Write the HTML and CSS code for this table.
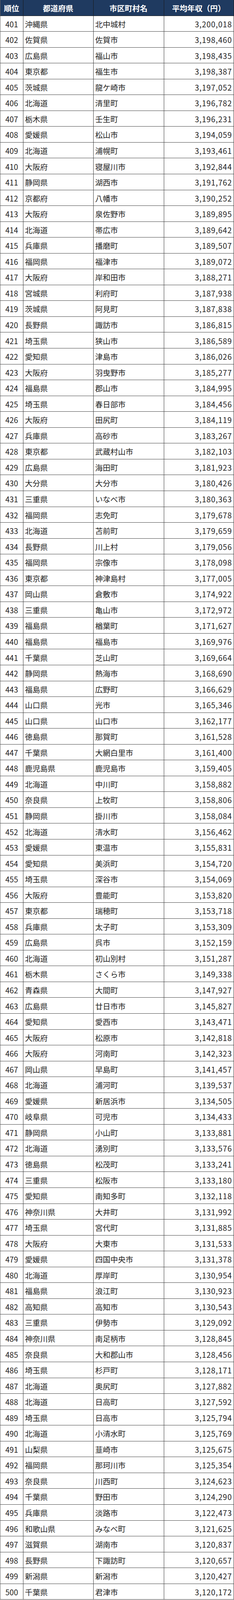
FILE: index.html
```html
<!DOCTYPE html>
<html lang="ja">
<head>
<meta charset="utf-8">
<title>平均年収ランキング 401〜500位</title>
<link rel="stylesheet" href="styles.css">
</head>
<body>
<table class="rank-table">
<thead>
<tr><th>順位</th><th>都道府県</th><th>市区町村名</th><th>平均年収（円）</th></tr>
</thead>
<tbody>
<tr><td class="rank">401</td><td>沖縄県</td><td>北中城村</td><td class="num">3,200,018</td></tr>
<tr><td class="rank">402</td><td>佐賀県</td><td>佐賀市</td><td class="num">3,198,460</td></tr>
<tr><td class="rank">403</td><td>広島県</td><td>福山市</td><td class="num">3,198,435</td></tr>
<tr><td class="rank">404</td><td>東京都</td><td>福生市</td><td class="num">3,198,387</td></tr>
<tr><td class="rank">405</td><td>茨城県</td><td>龍ケ崎市</td><td class="num">3,197,052</td></tr>
<tr><td class="rank">406</td><td>北海道</td><td>清里町</td><td class="num">3,196,782</td></tr>
<tr><td class="rank">407</td><td>栃木県</td><td>壬生町</td><td class="num">3,196,231</td></tr>
<tr><td class="rank">408</td><td>愛媛県</td><td>松山市</td><td class="num">3,194,059</td></tr>
<tr><td class="rank">409</td><td>北海道</td><td>浦幌町</td><td class="num">3,193,461</td></tr>
<tr><td class="rank">410</td><td>大阪府</td><td>寝屋川市</td><td class="num">3,192,844</td></tr>
<tr><td class="rank">411</td><td>静岡県</td><td>湖西市</td><td class="num">3,191,762</td></tr>
<tr><td class="rank">412</td><td>京都府</td><td>八幡市</td><td class="num">3,190,252</td></tr>
<tr><td class="rank">413</td><td>大阪府</td><td>泉佐野市</td><td class="num">3,189,895</td></tr>
<tr><td class="rank">414</td><td>北海道</td><td>帯広市</td><td class="num">3,189,642</td></tr>
<tr><td class="rank">415</td><td>兵庫県</td><td>播磨町</td><td class="num">3,189,507</td></tr>
<tr><td class="rank">416</td><td>福岡県</td><td>福津市</td><td class="num">3,189,072</td></tr>
<tr><td class="rank">417</td><td>大阪府</td><td>岸和田市</td><td class="num">3,188,271</td></tr>
<tr><td class="rank">418</td><td>宮城県</td><td>利府町</td><td class="num">3,187,938</td></tr>
<tr><td class="rank">419</td><td>茨城県</td><td>阿見町</td><td class="num">3,187,838</td></tr>
<tr><td class="rank">420</td><td>長野県</td><td>諏訪市</td><td class="num">3,186,815</td></tr>
<tr><td class="rank">421</td><td>埼玉県</td><td>狭山市</td><td class="num">3,186,589</td></tr>
<tr><td class="rank">422</td><td>愛知県</td><td>津島市</td><td class="num">3,186,026</td></tr>
<tr><td class="rank">423</td><td>大阪府</td><td>羽曳野市</td><td class="num">3,185,277</td></tr>
<tr><td class="rank">424</td><td>福島県</td><td>郡山市</td><td class="num">3,184,995</td></tr>
<tr><td class="rank">425</td><td>埼玉県</td><td>春日部市</td><td class="num">3,184,456</td></tr>
<tr><td class="rank">426</td><td>大阪府</td><td>田尻町</td><td class="num">3,184,119</td></tr>
<tr><td class="rank">427</td><td>兵庫県</td><td>高砂市</td><td class="num">3,183,267</td></tr>
<tr><td class="rank">428</td><td>東京都</td><td>武蔵村山市</td><td class="num">3,182,103</td></tr>
<tr><td class="rank">429</td><td>広島県</td><td>海田町</td><td class="num">3,181,923</td></tr>
<tr><td class="rank">430</td><td>大分県</td><td>大分市</td><td class="num">3,180,426</td></tr>
<tr><td class="rank">431</td><td>三重県</td><td>いなべ市</td><td class="num">3,180,363</td></tr>
<tr><td class="rank">432</td><td>福岡県</td><td>志免町</td><td class="num">3,179,678</td></tr>
<tr><td class="rank">433</td><td>北海道</td><td>苫前町</td><td class="num">3,179,659</td></tr>
<tr><td class="rank">434</td><td>長野県</td><td>川上村</td><td class="num">3,179,056</td></tr>
<tr><td class="rank">435</td><td>福岡県</td><td>宗像市</td><td class="num">3,178,098</td></tr>
<tr><td class="rank">436</td><td>東京都</td><td>神津島村</td><td class="num">3,177,005</td></tr>
<tr><td class="rank">437</td><td>岡山県</td><td>倉敷市</td><td class="num">3,174,922</td></tr>
<tr><td class="rank">438</td><td>三重県</td><td>亀山市</td><td class="num">3,172,972</td></tr>
<tr><td class="rank">439</td><td>福島県</td><td>楢葉町</td><td class="num">3,171,627</td></tr>
<tr><td class="rank">440</td><td>福島県</td><td>福島市</td><td class="num">3,169,976</td></tr>
<tr><td class="rank">441</td><td>千葉県</td><td>芝山町</td><td class="num">3,169,664</td></tr>
<tr><td class="rank">442</td><td>静岡県</td><td>熱海市</td><td class="num">3,168,690</td></tr>
<tr><td class="rank">443</td><td>福島県</td><td>広野町</td><td class="num">3,166,629</td></tr>
<tr><td class="rank">444</td><td>山口県</td><td>光市</td><td class="num">3,165,346</td></tr>
<tr><td class="rank">445</td><td>山口県</td><td>山口市</td><td class="num">3,162,177</td></tr>
<tr><td class="rank">446</td><td>徳島県</td><td>那賀町</td><td class="num">3,161,528</td></tr>
<tr><td class="rank">447</td><td>千葉県</td><td>大網白里市</td><td class="num">3,161,400</td></tr>
<tr><td class="rank">448</td><td>鹿児島県</td><td>鹿児島市</td><td class="num">3,159,405</td></tr>
<tr><td class="rank">449</td><td>北海道</td><td>中川町</td><td class="num">3,158,882</td></tr>
<tr><td class="rank">450</td><td>奈良県</td><td>上牧町</td><td class="num">3,158,806</td></tr>
<tr><td class="rank">451</td><td>静岡県</td><td>掛川市</td><td class="num">3,158,084</td></tr>
<tr><td class="rank">452</td><td>北海道</td><td>清水町</td><td class="num">3,156,462</td></tr>
<tr><td class="rank">453</td><td>愛媛県</td><td>東温市</td><td class="num">3,155,831</td></tr>
<tr><td class="rank">454</td><td>愛知県</td><td>美浜町</td><td class="num">3,154,720</td></tr>
<tr><td class="rank">455</td><td>埼玉県</td><td>深谷市</td><td class="num">3,154,069</td></tr>
<tr><td class="rank">456</td><td>大阪府</td><td>豊能町</td><td class="num">3,153,820</td></tr>
<tr><td class="rank">457</td><td>東京都</td><td>瑞穂町</td><td class="num">3,153,718</td></tr>
<tr><td class="rank">458</td><td>兵庫県</td><td>太子町</td><td class="num">3,153,309</td></tr>
<tr><td class="rank">459</td><td>広島県</td><td>呉市</td><td class="num">3,152,159</td></tr>
<tr><td class="rank">460</td><td>北海道</td><td>初山別村</td><td class="num">3,151,287</td></tr>
<tr><td class="rank">461</td><td>栃木県</td><td>さくら市</td><td class="num">3,149,338</td></tr>
<tr><td class="rank">462</td><td>青森県</td><td>大間町</td><td class="num">3,147,927</td></tr>
<tr><td class="rank">463</td><td>広島県</td><td>廿日市市</td><td class="num">3,145,827</td></tr>
<tr><td class="rank">464</td><td>愛知県</td><td>愛西市</td><td class="num">3,143,471</td></tr>
<tr><td class="rank">465</td><td>大阪府</td><td>松原市</td><td class="num">3,142,818</td></tr>
<tr><td class="rank">466</td><td>大阪府</td><td>河南町</td><td class="num">3,142,323</td></tr>
<tr><td class="rank">467</td><td>岡山県</td><td>早島町</td><td class="num">3,141,457</td></tr>
<tr><td class="rank">468</td><td>北海道</td><td>浦河町</td><td class="num">3,139,537</td></tr>
<tr><td class="rank">469</td><td>愛媛県</td><td>新居浜市</td><td class="num">3,134,505</td></tr>
<tr><td class="rank">470</td><td>岐阜県</td><td>可児市</td><td class="num">3,134,433</td></tr>
<tr><td class="rank">471</td><td>静岡県</td><td>小山町</td><td class="num">3,133,881</td></tr>
<tr><td class="rank">472</td><td>北海道</td><td>湧別町</td><td class="num">3,133,576</td></tr>
<tr><td class="rank">473</td><td>徳島県</td><td>松茂町</td><td class="num">3,133,241</td></tr>
<tr><td class="rank">474</td><td>三重県</td><td>松阪市</td><td class="num">3,133,180</td></tr>
<tr><td class="rank">475</td><td>愛知県</td><td>南知多町</td><td class="num">3,132,118</td></tr>
<tr><td class="rank">476</td><td>神奈川県</td><td>大井町</td><td class="num">3,131,992</td></tr>
<tr><td class="rank">477</td><td>埼玉県</td><td>宮代町</td><td class="num">3,131,885</td></tr>
<tr><td class="rank">478</td><td>大阪府</td><td>大東市</td><td class="num">3,131,533</td></tr>
<tr><td class="rank">479</td><td>愛媛県</td><td>四国中央市</td><td class="num">3,131,378</td></tr>
<tr><td class="rank">480</td><td>北海道</td><td>厚岸町</td><td class="num">3,130,954</td></tr>
<tr><td class="rank">481</td><td>福島県</td><td>浪江町</td><td class="num">3,130,923</td></tr>
<tr><td class="rank">482</td><td>高知県</td><td>高知市</td><td class="num">3,130,543</td></tr>
<tr><td class="rank">483</td><td>三重県</td><td>伊勢市</td><td class="num">3,129,092</td></tr>
<tr><td class="rank">484</td><td>神奈川県</td><td>南足柄市</td><td class="num">3,128,845</td></tr>
<tr><td class="rank">485</td><td>奈良県</td><td>大和郡山市</td><td class="num">3,128,456</td></tr>
<tr><td class="rank">486</td><td>埼玉県</td><td>杉戸町</td><td class="num">3,128,171</td></tr>
<tr><td class="rank">487</td><td>北海道</td><td>奥尻町</td><td class="num">3,127,882</td></tr>
<tr><td class="rank">488</td><td>北海道</td><td>日高町</td><td class="num">3,127,592</td></tr>
<tr><td class="rank">489</td><td>埼玉県</td><td>日高市</td><td class="num">3,125,794</td></tr>
<tr><td class="rank">490</td><td>北海道</td><td>小清水町</td><td class="num">3,125,769</td></tr>
<tr><td class="rank">491</td><td>山梨県</td><td>韮崎市</td><td class="num">3,125,675</td></tr>
<tr><td class="rank">492</td><td>福岡県</td><td>那珂川市</td><td class="num">3,125,354</td></tr>
<tr><td class="rank">493</td><td>奈良県</td><td>川西町</td><td class="num">3,124,623</td></tr>
<tr><td class="rank">494</td><td>千葉県</td><td>野田市</td><td class="num">3,124,290</td></tr>
<tr><td class="rank">495</td><td>兵庫県</td><td>淡路市</td><td class="num">3,122,473</td></tr>
<tr><td class="rank">496</td><td>和歌山県</td><td>みなべ町</td><td class="num">3,121,625</td></tr>
<tr><td class="rank">497</td><td>滋賀県</td><td>湖南市</td><td class="num">3,120,837</td></tr>
<tr><td class="rank">498</td><td>長野県</td><td>下諏訪町</td><td class="num">3,120,657</td></tr>
<tr><td class="rank">499</td><td>新潟県</td><td>新潟市</td><td class="num">3,120,427</td></tr>
<tr><td class="rank">500</td><td>千葉県</td><td>君津市</td><td class="num">3,120,172</td></tr>
</tbody>
</table>
</body>
</html>
```
FILE: styles.css
```css
html, body {
  margin: 0;
  padding: 0;
  background: #ffffff;
}

body {
  font-family: "Noto Sans CJK JP", "Noto Sans", sans-serif;
  color: #222222;
}

/* The table fills the window height exactly: a header row plus 100 data rows. */
.rank-table {
  display: block;
  width: 600px;
  font-size: 19.5px;
}

.rank-table thead,
.rank-table tbody {
  display: block;
}

.rank-table tr {
  display: grid;
  grid-template-columns: 60px 180px 181px 179px;
  grid-template-rows: 100%;
  height: calc(100vh / 101);
  overflow: hidden;
}

.rank-table th,
.rank-table td {
  display: flex;
  align-items: center;
  box-sizing: border-box;
  min-width: 0;
  padding: 2px 5px 0 4px;
  border-right: 1px solid #333333;
  border-bottom: 1px solid #444444;
  white-space: nowrap;
  overflow: hidden;
  line-height: 1.2;
}

.rank-table th:first-child,
.rank-table td:first-child {
  border-left: 1px solid #666666;
}

.rank-table th {
  justify-content: center;
  background: #1f3a60;
  color: #ffffff;
  font-weight: 700;
  border-right-color: #1a1a1a;
  border-bottom-color: #1a1a1a;
}

.rank-table td.rank {
  justify-content: center;
  padding-left: 2px;
  padding-right: 2px;
}

.rank-table td.num {
  justify-content: flex-end;
  letter-spacing: 1px;
  padding-right: 4px;
}
```
